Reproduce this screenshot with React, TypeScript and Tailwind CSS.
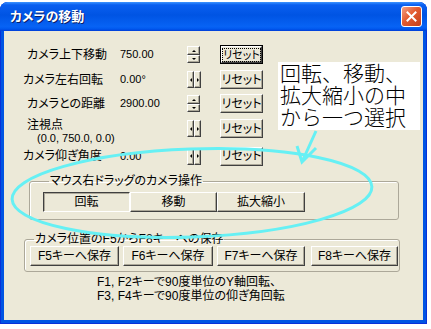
const font = "[font-family:'Liberation_Sans','Noto_Sans_CJK_JP',sans-serif] [font-feature-settings:'palt']"

const raised =
  'bg-[#ECE9D8] border border-t-white border-l-white border-r-[#404040] border-b-[#404040] shadow-[inset_-1px_-1px_0_#ACA899]'
const sunken =
  'bg-[#ECE9D8] border border-t-[#404040] border-l-[#404040] border-r-white border-b-white shadow-[inset_1px_1px_0_#ACA899]'

function Arrow({ dir }: { dir: 'up' | 'down' | 'left' | 'right' }) {
  const pts = {
    up: '0,3 2,1 4,3',
    down: '0,1 2,3 4,1',
    left: '3,0 1,2 3,4',
    right: '1,0 3,2 1,4',
  }[dir]
  return (
    <svg width="4" height="4" viewBox="0 0 4 4">
      <polygon points={pts} fill="#000" />
    </svg>
  )
}

function SpinV() {
  return (
    <div className="flex flex-col w-[13px] h-[17px]">
      <div className={`${raised} h-[9px] flex items-center justify-center`}>
        <Arrow dir="up" />
      </div>
      <div className={`${raised} h-[8px] flex items-center justify-center`}>
        <Arrow dir="down" />
      </div>
    </div>
  )
}

function SpinH() {
  return (
    <div className="flex w-[14px] h-[17px]">
      <div className={`${raised} w-[7px] flex items-center justify-center`}>
        <Arrow dir="left" />
      </div>
      <div className={`${raised} w-[7px] flex items-center justify-center`}>
        <Arrow dir="right" />
      </div>
    </div>
  )
}

function Reset({ active }: { active?: boolean }) {
  if (active) {
    return (
      <div className="w-[43px] h-[19px] border border-black">
        <div className={`${raised} w-full h-full flex items-center justify-center`}>
          <span className="border border-dotted border-black whitespace-nowrap leading-[12px] text-[11px]">リセット</span>
        </div>
      </div>
    )
  }
  return (
    <div className={`${raised} w-[43px] h-[19px] flex items-center justify-center text-[12px] whitespace-nowrap`}>
      リセット
    </div>
  )
}

function Row({
  label,
  value,
  spin,
  active,
  indent,
  h,
}: {
  label: string
  value: string
  spin: 'v' | 'h'
  active?: boolean
  indent?: boolean
  h: string
}) {
  return (
    <div className={`flex items-center ${h}`}>
      <div className={`w-[97px] text-[12px] ${indent ? 'pl-[4px]' : ''}`}>{label}</div>
      <div className="w-[67px] text-[11px]">{value}</div>
      <div className="w-[13px] mr-[20px]">{spin === 'v' ? <SpinV /> : <SpinH />}</div>
      <Reset active={active} />
    </div>
  )
}

export default function App() {
  return (
    <div className={`relative w-[431px] h-[329px] bg-white overflow-hidden text-black ${font}`}>
      <div className="mt-[2px] w-[427px] h-[322px] flex flex-col rounded-t-[8px] bg-[#0054E3] shadow-[inset_0_0_0_1px_#0831D9]">
        <div className="h-[29px] flex items-center justify-between pl-[10px] pr-[5px] rounded-t-[8px] bg-[linear-gradient(180deg,#3D95FF_0%,#0A5FF0_10%,#0054E3_45%,#0763F5_85%,#0058EE_93%,#003DD7_100%)]">
          <span className="text-white font-bold text-[13px] [text-shadow:1px_1px_0_#0A1E6A]">カメラの移動</span>
          <div className="w-[21px] h-[21px] rounded-[3px] border border-white bg-[linear-gradient(135deg,#F2A085_0%,#E35B30_45%,#C4401A_100%)] flex items-center justify-center">
            <svg width="11" height="11" viewBox="0 0 11 11">
              <path d="M1.5 1.5 L9.5 9.5 M9.5 1.5 L1.5 9.5" stroke="#fff" strokeWidth="2" strokeLinecap="square" />
            </svg>
          </div>
        </div>
        <div className="flex-1 mx-[4px] mb-[4px] bg-[#ECE9D8] flex flex-col">
          <div className="flex items-start pt-[11px]">
            <div className="pl-[19px] flex flex-col">
              <Row label="カメラ上下移動" value="750.00" spin="v" active indent h="h-[25px]" />
              <Row label="カメラ左右回転" value="0.00°" spin="h" h="h-[25px]" />
              <Row label="カメラとの距離" value="2900.00" spin="v" indent h="h-[23px]" />
              <div className="flex h-[30px]">
                <div className="w-[164px] text-[12px] flex flex-col">
                  <span className="pl-[4px] leading-[14px] pt-[3px]">注視点</span>
                  <span className="pl-[14px] text-[11px] leading-[13px]">(0.0, 750.0, 0.0)</span>
                </div>
                <div className="w-[13px] mr-[20px] pt-[5px]">
                  <SpinH />
                </div>
                <div className="pt-[4px]">
                  <Reset />
                </div>
              </div>
              <Row label="カメラ仰ぎ角度" value="0.00" spin="h" h="h-[22px]" />
            </div>
            <div className="ml-[15px] mt-[20px] w-[142px] h-[68px] bg-white pl-[2px] pt-[1px] text-[21px] leading-[22px] [font-feature-settings:normal] font-light">
              <div>回転、移動、</div>
              <div>拡大縮小の中</div>
              <div>から一つ選択</div>
            </div>
          </div>

          <fieldset className="mt-[7px] ml-[25px] w-[370px] border border-[#ACA899] rounded-[3px] pl-[13px] pt-[4px] pb-[7px] shadow-[inset_1px_1px_0_#fff]">
            <legend className="ml-[6px] px-[1px] text-[12px] leading-[14px]">マウス右ドラッグのカメラ操作</legend>
            <div className="flex">
              <div className={`${sunken} w-[87px] h-[20px] flex items-center justify-center text-[12px]`}>回転</div>
              <div className={`${raised} w-[87px] h-[20px] flex items-center justify-center text-[12px]`}>移動</div>
              <div className={`${raised} w-[88px] h-[20px] flex items-center justify-center text-[12px]`}>拡大縮小</div>
            </div>
          </fieldset>

          <fieldset className="mt-[12px] ml-[20px] w-[376px] border border-[#ACA899] rounded-[3px] pl-[5px] pb-[5px] shadow-[inset_1px_1px_0_#fff]">
            <legend className="ml-[4px] px-[1px] text-[12px] leading-[14px]">カメラ位置のF5からF8キーへの保存</legend>
            <div className="flex text-[12px]">
              <div className={`${raised} w-[89px] h-[20px] flex items-center justify-center`}>F5キーへ保存</div>
              <div className={`${raised} ml-[4px] w-[90px] h-[20px] flex items-center justify-center`}>F6キーへ保存</div>
              <div className={`${raised} ml-[4px] w-[88px] h-[20px] flex items-center justify-center`}>F7キーへ保存</div>
              <div className={`${raised} ml-[6px] w-[87px] h-[20px] flex items-center justify-center`}>F8キーへ保存</div>
            </div>
          </fieldset>

          <div className="mt-[3px] pl-[93px] text-[12px] leading-[14px]">
            <div>F1, F2キーで90度単位のY軸回転、</div>
            <div>F3, F4キーで90度単位の仰ぎ角回転</div>
          </div>
        </div>
      </div>

      <svg className="absolute inset-0 pointer-events-none" width="431" height="329" viewBox="0 0 431 329">
        <ellipse cx="192" cy="193" rx="180" ry="44" fill="none" stroke="#66F0F4" strokeWidth="3" transform="rotate(-2 192 193)" />
        <path d="M316 131 L302 162 M297 146 L302 162 L316 148" fill="none" stroke="#66F0F4" strokeWidth="3" />
      </svg>
    </div>
  )
}
